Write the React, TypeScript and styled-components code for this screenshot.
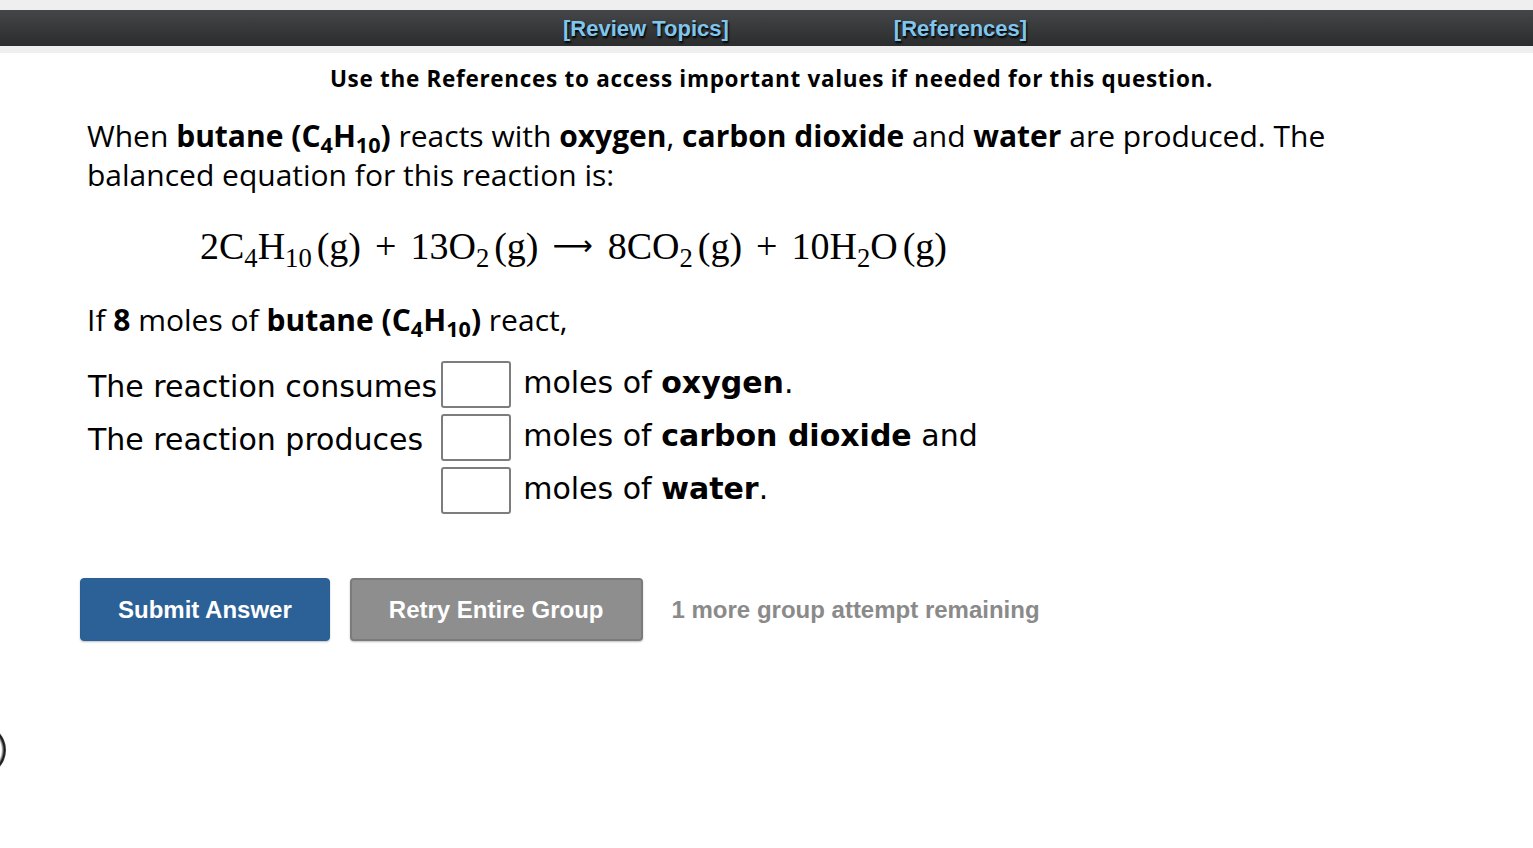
import React from "react";
import styled, { createGlobalStyle } from "styled-components";

const GlobalStyle = createGlobalStyle`
  html, body {
    margin: 0;
    padding: 0;
    background: #ffffff;
    color: #000;
  }
  body {
    font-family: "Open Sans", "Noto Sans", sans-serif;
  }
`;

const Page = styled.div`
  position: relative;
  width: 1533px;
  height: 848px;
  overflow: hidden;
  background: #fff;
`;

const TopStrip = styled.div`
  background: #efefef;
  padding: 10px 0 7px;
`;

const NavBar = styled.div`
  height: 36px;
  background: linear-gradient(#454647, #2b2c2d);
  display: flex;
  align-items: center;
  padding-left: 563px;
  gap: 165px;
`;

const NavLink = styled.a`
  font-family: "Liberation Sans", Arial, sans-serif;
  font-weight: 700;
  font-size: 22px;
  color: #7fc6ee;
  text-decoration: none;
  text-shadow: 1px 2px 2px #000;
  margin-top: 1px;
`;

const Notice = styled.div`
  text-align: center;
  font-weight: 700;
  font-size: 22.5px;
  letter-spacing: 0.7px;
  margin-top: 11px;
  padding-left: 10px;
  line-height: 30px;
`;

const Question = styled.div`
  padding-left: 87px;
  width: 1290px;
`;

const Para = styled.p`
  font-size: 30px;
  line-height: 39px;
  margin: 22px 0 0;
`;

const Sub = styled.sub`
  font-size: 0.72em;
  vertical-align: -0.3em;
  line-height: 0;
`;

const Equation = styled.div`
  font-family: "Liberation Serif", "Times New Roman", serif;
  font-size: 38px;
  margin: 30px 0 0 113px;
  line-height: 44px;
  white-space: nowrap;
  display: flex;
  align-items: baseline;
`;

const Op = styled.span`
  margin: 0 14px;
`;

const Arrow = styled.span`
  font-family: "DejaVu Sans", sans-serif;
  font-size: 28px;
  margin: 0 15px 0 14px;
  position: relative;
  top: -4px;
`;

const MathSub = styled.sub`
  font-size: 0.7em;
  vertical-align: -0.3em;
  line-height: 0;
`;

const Paren = styled.span`
  margin-left: 5px;
`;

const Prompt = styled.p`
  font-size: 30px;
  line-height: 39px;
  margin: 28px 0 0;
`;

const AnswerGrid = styled.div`
  display: grid;
  grid-template-columns: auto 70px auto;
  grid-auto-rows: 47px;
  justify-content: start;
  column-gap: 4px;
  row-gap: 6px;
  align-items: center;
  margin-top: 22px;
  margin-left: 1px;
  font-family: "DejaVu Sans", Verdana, sans-serif;
  font-size: 30px;
`;

const Label = styled.span`
  line-height: 47px;
  position: relative;
  top: 2px;
`;

const Box = styled.input`
  width: 70px;
  height: 47px;
  box-sizing: border-box;
  border: 2px solid #7d7d7d;
  border-radius: 3px;
  background: #fff;
  padding: 0;
`;

const Unit = styled.span`
  margin-left: 8px;
  line-height: 47px;
  position: relative;
  top: -2px;
`;

const Actions = styled.div`
  display: flex;
  align-items: center;
  gap: 20px;
  padding-left: 80px;
  margin-top: 64px;
  font-family: "Liberation Sans", Arial, sans-serif;
`;

const Button = styled.button<{ $variant: "primary" | "muted" }>`
  height: 63px;
  padding: 0 37px;
  border-radius: 4px;
  border: ${(p) => (p.$variant === "primary" ? "1px solid #2a5f92" : "2px solid #7b7b7b")};
  background: ${(p) => (p.$variant === "primary" ? "#2b6196" : "#8e8e8e")};
  color: #fff;
  font-family: "Liberation Sans", Arial, sans-serif;
  font-weight: 700;
  font-size: 24px;
  box-shadow: 0 1px 2px rgba(0, 0, 0, 0.25);
`;

const Remaining = styled.span`
  color: #8a8a8a;
  font-weight: 700;
  font-size: 24px;
  margin-left: 9px;
`;

const EdgeBlob = styled.div`
  position: absolute;
  left: -46px;
  top: 724px;
  width: 52px;
  height: 52px;
  border-radius: 50%;
  background: radial-gradient(circle, transparent 58%, #111 66%, rgba(0, 0, 0, 0.5) 76%, transparent 100%);
`;

export default function App() {
  return (
    <Page>
      <GlobalStyle />
      <TopStrip>
        <NavBar>
          <NavLink href="#">[Review Topics]</NavLink>
          <NavLink href="#">[References]</NavLink>
        </NavBar>
      </TopStrip>
      <Notice>Use the References to access important values if needed for this question.</Notice>
      <Question>
        <Para>
          When <b>butane (C<Sub>4</Sub>H<Sub>10</Sub>)</b> reacts with <b>oxygen</b>,{" "}
          <b>carbon dioxide</b> and <b>water</b> are produced. The balanced equation for this
          reaction is:
        </Para>
        <Equation>
          <span>
            2C<MathSub>4</MathSub>H<MathSub>10</MathSub>
          </span>
          <Paren>(g)</Paren>
          <Op>+</Op>
          <span>
            13O<MathSub>2</MathSub>
          </span>
          <Paren>(g)</Paren>
          <Arrow>⟶</Arrow>
          <span>
            8CO<MathSub>2</MathSub>
          </span>
          <Paren>(g)</Paren>
          <Op>+</Op>
          <span>
            10H<MathSub>2</MathSub>O
          </span>
          <Paren>(g)</Paren>
        </Equation>
        <Prompt>
          If <b>8</b> moles of <b>butane (C<Sub>4</Sub>H<Sub>10</Sub>)</b> react,
        </Prompt>
      </Question>
      <Question>
        <AnswerGrid>
          <Label>The reaction consumes</Label>
          <Box type="text" />
          <Unit>
            moles of <b>oxygen</b>.
          </Unit>
          <Label>The reaction produces</Label>
          <Box type="text" />
          <Unit>
            moles of <b>carbon dioxide</b> and
          </Unit>
          <span />
          <Box type="text" />
          <Unit>
            moles of <b>water</b>.
          </Unit>
        </AnswerGrid>
      </Question>
      <Actions>
        <Button $variant="primary">Submit Answer</Button>
        <Button $variant="muted">Retry Entire Group</Button>
        <Remaining>1 more group attempt remaining</Remaining>
      </Actions>
      <EdgeBlob />
    </Page>
  );
}
